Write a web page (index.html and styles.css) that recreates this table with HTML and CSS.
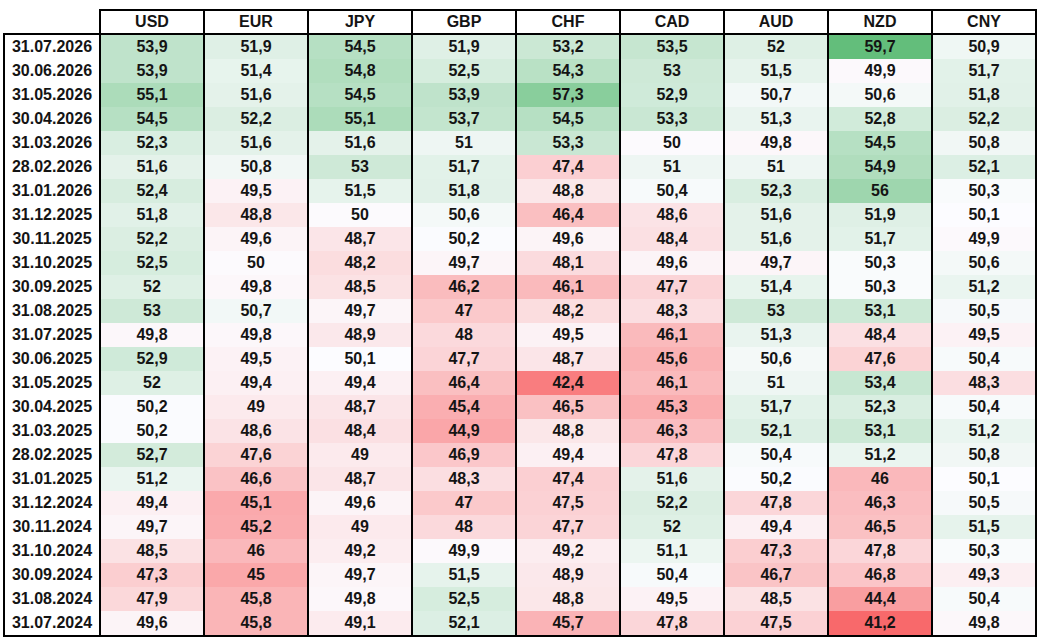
FILE: index.html
```html
<!DOCTYPE html>
<html lang="de">
<head>
<meta charset="utf-8">
<title>PMI</title>
<link rel="stylesheet" href="styles.css">
</head>
<body>
<table class="grid" id="grid">
  <colgroup>
    <col class="col-date">
    <col class="col-cur"><col class="col-cur"><col class="col-cur">
    <col class="col-cur"><col class="col-cur"><col class="col-cur">
    <col class="col-cur"><col class="col-cur"><col class="col-cur">
  </colgroup>
  <thead>
    <tr>
      <th class="corner"></th>
      <th>USD</th><th>EUR</th><th>JPY</th><th>GBP</th><th>CHF</th><th>CAD</th><th>AUD</th><th>NZD</th><th>CNY</th>
    </tr>
  </thead>
  <tbody>
    <tr><td class="date">31.07.2026</td><td>53,9</td><td>51,9</td><td>54,5</td><td>51,9</td><td>53,2</td><td>53,5</td><td>52</td><td>59,7</td><td>50,9</td></tr>
    <tr><td class="date">30.06.2026</td><td>53,9</td><td>51,4</td><td>54,8</td><td>52,5</td><td>54,3</td><td>53</td><td>51,5</td><td>49,9</td><td>51,7</td></tr>
    <tr><td class="date">31.05.2026</td><td>55,1</td><td>51,6</td><td>54,5</td><td>53,9</td><td>57,3</td><td>52,9</td><td>50,7</td><td>50,6</td><td>51,8</td></tr>
    <tr><td class="date">30.04.2026</td><td>54,5</td><td>52,2</td><td>55,1</td><td>53,7</td><td>54,5</td><td>53,3</td><td>51,3</td><td>52,8</td><td>52,2</td></tr>
    <tr><td class="date">31.03.2026</td><td>52,3</td><td>51,6</td><td>51,6</td><td>51</td><td>53,3</td><td>50</td><td>49,8</td><td>54,5</td><td>50,8</td></tr>
    <tr><td class="date">28.02.2026</td><td>51,6</td><td>50,8</td><td>53</td><td>51,7</td><td>47,4</td><td>51</td><td>51</td><td>54,9</td><td>52,1</td></tr>
    <tr><td class="date">31.01.2026</td><td>52,4</td><td>49,5</td><td>51,5</td><td>51,8</td><td>48,8</td><td>50,4</td><td>52,3</td><td>56</td><td>50,3</td></tr>
    <tr><td class="date">31.12.2025</td><td>51,8</td><td>48,8</td><td>50</td><td>50,6</td><td>46,4</td><td>48,6</td><td>51,6</td><td>51,9</td><td>50,1</td></tr>
    <tr><td class="date">30.11.2025</td><td>52,2</td><td>49,6</td><td>48,7</td><td>50,2</td><td>49,6</td><td>48,4</td><td>51,6</td><td>51,7</td><td>49,9</td></tr>
    <tr><td class="date">31.10.2025</td><td>52,5</td><td>50</td><td>48,2</td><td>49,7</td><td>48,1</td><td>49,6</td><td>49,7</td><td>50,3</td><td>50,6</td></tr>
    <tr><td class="date">30.09.2025</td><td>52</td><td>49,8</td><td>48,5</td><td>46,2</td><td>46,1</td><td>47,7</td><td>51,4</td><td>50,3</td><td>51,2</td></tr>
    <tr><td class="date">31.08.2025</td><td>53</td><td>50,7</td><td>49,7</td><td>47</td><td>48,2</td><td>48,3</td><td>53</td><td>53,1</td><td>50,5</td></tr>
    <tr><td class="date">31.07.2025</td><td>49,8</td><td>49,8</td><td>48,9</td><td>48</td><td>49,5</td><td>46,1</td><td>51,3</td><td>48,4</td><td>49,5</td></tr>
    <tr><td class="date">30.06.2025</td><td>52,9</td><td>49,5</td><td>50,1</td><td>47,7</td><td>48,7</td><td>45,6</td><td>50,6</td><td>47,6</td><td>50,4</td></tr>
    <tr><td class="date">31.05.2025</td><td>52</td><td>49,4</td><td>49,4</td><td>46,4</td><td>42,4</td><td>46,1</td><td>51</td><td>53,4</td><td>48,3</td></tr>
    <tr><td class="date">30.04.2025</td><td>50,2</td><td>49</td><td>48,7</td><td>45,4</td><td>46,5</td><td>45,3</td><td>51,7</td><td>52,3</td><td>50,4</td></tr>
    <tr><td class="date">31.03.2025</td><td>50,2</td><td>48,6</td><td>48,4</td><td>44,9</td><td>48,8</td><td>46,3</td><td>52,1</td><td>53,1</td><td>51,2</td></tr>
    <tr><td class="date">28.02.2025</td><td>52,7</td><td>47,6</td><td>49</td><td>46,9</td><td>49,4</td><td>47,8</td><td>50,4</td><td>51,2</td><td>50,8</td></tr>
    <tr><td class="date">31.01.2025</td><td>51,2</td><td>46,6</td><td>48,7</td><td>48,3</td><td>47,4</td><td>51,6</td><td>50,2</td><td>46</td><td>50,1</td></tr>
    <tr><td class="date">31.12.2024</td><td>49,4</td><td>45,1</td><td>49,6</td><td>47</td><td>47,5</td><td>52,2</td><td>47,8</td><td>46,3</td><td>50,5</td></tr>
    <tr><td class="date">30.11.2024</td><td>49,7</td><td>45,2</td><td>49</td><td>48</td><td>47,7</td><td>52</td><td>49,4</td><td>46,5</td><td>51,5</td></tr>
    <tr><td class="date">31.10.2024</td><td>48,5</td><td>46</td><td>49,2</td><td>49,9</td><td>49,2</td><td>51,1</td><td>47,3</td><td>47,8</td><td>50,3</td></tr>
    <tr><td class="date">30.09.2024</td><td>47,3</td><td>45</td><td>49,7</td><td>51,5</td><td>48,9</td><td>50,4</td><td>46,7</td><td>46,8</td><td>49,3</td></tr>
    <tr><td class="date">31.08.2024</td><td>47,9</td><td>45,8</td><td>49,8</td><td>52,5</td><td>48,8</td><td>49,5</td><td>48,5</td><td>44,4</td><td>50,4</td></tr>
    <tr><td class="date">31.07.2024</td><td>49,6</td><td>45,8</td><td>49,1</td><td>52,1</td><td>45,7</td><td>47,8</td><td>47,5</td><td>41,2</td><td>49,8</td></tr>
  </tbody>
</table>
<script src="script.js"></script>
</body>
</html>
```

FILE: styles.css
```css
html, body {
  margin: 0;
  background: #ffffff;
}

body {
  padding: 9px 0 0 3px;
  font-family: "Liberation Sans", Arial, sans-serif;
  font-weight: bold;
  font-size: 16px;
  color: #141414;
}

.grid {
  border-collapse: collapse;
  table-layout: fixed;
  width: 1032px;
}

.col-date {
  width: 96px;
}

.col-cur {
  width: 104px;
}

.grid th,
.grid td {
  padding: 0;
  text-align: center;
  vertical-align: middle;
  line-height: 22px;
  white-space: nowrap;
}

.grid th {
  height: 22px;
  border: 2px solid #000;
  background: #ffffff;
}

.grid th.corner {
  border-top: none;
  border-left: none;
  border-right: 2px solid #000;
  border-bottom: 2px solid #000;
}

.grid td {
  height: 24px;
  border-left: 2px solid #000;
  border-right: 2px solid #000;
  background: #fcfcff;
}

.grid td.date {
  background: #ffffff;
}

.grid tbody tr:last-child td {
  border-bottom: 2px solid #000;
}
```

FILE: script.js
```js
(function () {
  var cells = Array.prototype.slice.call(
    document.querySelectorAll('#grid tbody td:not(.date)')
  );
  var vals = cells.map(function (c) {
    return parseFloat(c.textContent.replace(',', '.'));
  });
  var sorted = vals.slice().sort(function (a, b) { return a - b; });
  var min = sorted[0];
  var max = sorted[sorted.length - 1];
  var pos = (sorted.length - 1) * 0.5;
  var lo = Math.floor(pos);
  var mid = sorted[lo] + (sorted[Math.ceil(pos)] - sorted[lo]) * (pos - lo);

  var red = [248, 105, 107];
  var white = [252, 252, 255];
  var green = [99, 190, 123];

  function mix(a, b, t) {
    return 'rgb(' + [0, 1, 2].map(function (i) {
      return Math.round(a[i] + (b[i] - a[i]) * t);
    }).join(',') + ')';
  }

  cells.forEach(function (c, i) {
    var v = vals[i];
    var col;
    if (v >= mid) {
      col = mix(white, green, max === mid ? 0 : (v - mid) / (max - mid));
    } else {
      col = mix(white, red, (mid - v) / (mid - min));
    }
    c.style.backgroundColor = col;
  });
})();
```
